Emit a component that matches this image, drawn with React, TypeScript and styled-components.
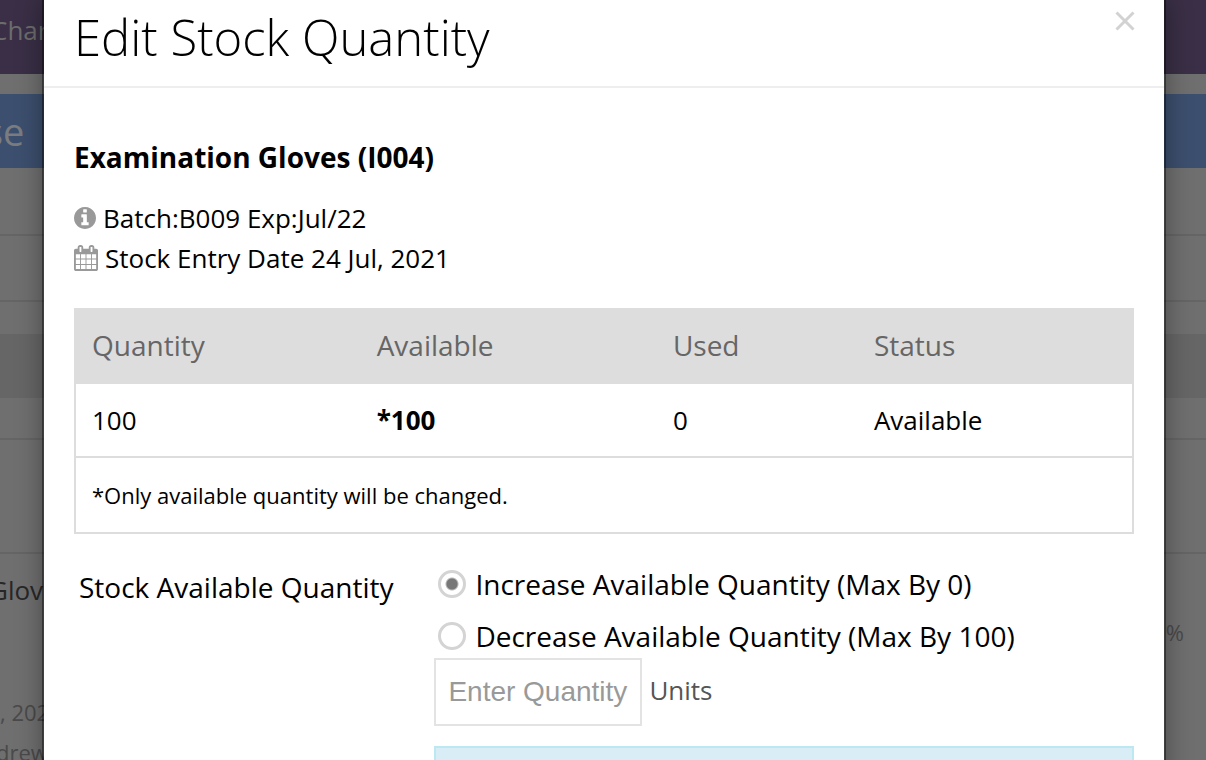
import React, { useState } from "react";
import styled, { createGlobalStyle } from "styled-components";

const GlobalStyle = createGlobalStyle`
  * { box-sizing: border-box; }
  body {
    margin: 0;
    background: #6f6f6f;
    color: #000;
    font-family: "Open Sans", "Noto Sans", sans-serif;
    font-size: 26px;
    line-height: 40px;
  }
`;

const Screen = styled.div`
  position: relative;
  height: 100vh;
  overflow: hidden;
`;

const Page = styled.div`
  background: #6f6f6f;
  height: 100%;
  overflow: hidden;
`;

const TopBar = styled.div`
  height: 74px;
  padding-top: 10px;
  margin-bottom: 20px;
  background: #3a2f46;
  color: #6c6c6c;
`;

const Heading = styled.div`
  height: 74px;
  background: #3c4f6e;
  color: #7a7c80;
  font-size: 38px;
  line-height: 74px;
`;

const Cut = styled.span<{ $by: number }>`
  display: block;
  margin-left: -${(p) => p.$by}px;
  white-space: nowrap;
`;

const Line = styled.div<{ $height: number }>`
  height: ${(p) => p.$height}px;
  border-bottom: 2px solid #656565;
`;

const Band = styled.div`
  height: 64px;
  margin-top: 32px;
  background: #666;
`;

const ItemRow = styled.div`
  display: flex;
  justify-content: space-between;
  height: 138px;
  padding: 16px 22px 0 0;
  color: #272727;
`;

const Percent = styled.span`
  padding-top: 42px;
  color: #4a4a4a;
  font-size: 22px;
`;

const Meta = styled.div`
  color: #4a4a4a;
  font-size: 22px;
`;

const Overlay = styled.div`
  position: absolute;
  inset: 0;
  padding: 0 40px 0 42px;
`;

const Dialog = styled.section`
  min-height: 100%;
  background: #fff;
  background-clip: padding-box;
  border: solid rgba(0, 0, 0, 0.42);
  border-width: 0 2px;
  box-shadow: 0 0 24px rgba(0, 0, 0, 0.35);
`;

const DialogHeader = styled.header`
  display: flex;
  justify-content: space-between;
  align-items: flex-start;
  height: 88px;
  padding: 4px 28px 0 30px;
  border-bottom: 2px solid #eee;
`;

const Title = styled.h1`
  margin: 0;
  font-size: 49px;
  font-weight: 300;
  line-height: 66px;
`;

const CloseButton = styled.button`
  display: flex;
  margin: 6px 0 0;
  padding: 0;
  border: 0;
  background: none;
  color: #d2d2d2;
`;

const DialogBody = styled.div`
  padding: 50px 30px 0;
`;

const ItemName = styled.h2`
  margin: 0 0 22px;
  font-size: 28px;
  font-weight: 700;
  line-height: 38px;
`;

const Detail = styled.div`
  display: flex;
  align-items: center;
  gap: 7px;
  height: 40px;

  svg { color: #999; }
`;

const StockTable = styled.table`
  width: 100%;
  margin: 30px 0 26px;
  border-collapse: collapse;
  border: 2px solid #ddd;
  table-layout: fixed;

  th {
    height: 74px;
    padding: 0 16px 2px;
    background: #ddd;
    color: #666;
    font-size: 28px;
    font-weight: 400;
    text-align: left;
  }
  td {
    height: 74px;
    padding: 0 16px 1px;
    border-top: 2px solid #ddd;
  }
`;

const Note = styled.td`
  && { height: 76px; }
  font-size: 22px;
`;

const Form = styled.form`
  display: grid;
  grid-template-columns: 34% 66%;
  font-size: 28px;
`;

const FieldLabel = styled.span`
  padding: 7px 0 0 5px;
`;

const Choice = styled.label`
  display: flex;
  align-items: center;
  gap: 9px;
  height: 52px;
  padding-left: 4px;
  line-height: 40px;
  white-space: nowrap;
`;

const Radio = styled.input`
  appearance: none;
  flex: none;
  width: 28px;
  height: 28px;
  margin: 0;
  border: 3px solid #d4d4d4;
  border-radius: 50%;
  background: #fff;

  &:checked {
    background: radial-gradient(circle, #777 5px, #fff 7px);
  }
`;

const Choices = styled.div`
  margin: -2px 0 -4px;
`;

const Amount = styled.div`
  display: flex;
  align-items: center;
  gap: 7px;
  margin-bottom: 20px;
`;

const AmountInput = styled.input`
  width: 208px;
  height: 68px;
  padding: 0 12px;
  border: 2px solid #e3e3e3;
  background: #fff;
  color: #555;
  font-family: "Liberation Sans", Arial, sans-serif;
  font-size: 28px;

  &::placeholder { color: #999; opacity: 1; }
`;

const Units = styled.label`
  padding-bottom: 4px;
  color: #555;
  font-size: 26px;
`;

const Notice = styled.div`
  height: 80px;
  border: 2px solid #bce8f1;
  background: #d9edf7;
`;

const InfoIcon = () => (
  <svg width="22" height="22" viewBox="128 128 1536 1536" fill="currentColor" aria-hidden="true">
    <path d="M1152 1376v-160q0-14-9-23t-23-9h-96v-512q0-14-9-23t-23-9h-320q-14 0-23 9t-9 23v160q0 14 9 23t23 9h96v320h-96q-14 0-23 9t-9 23v160q0 14 9 23t23 9h448q14 0 23-9t9-23zm-128-896v-160q0-14-9-23t-23-9h-192q-14 0-23 9t-9 23v160q0 14 9 23t23 9h192q14 0 23-9t9-23zm640 416q0 209-103 385.5t-279.5 279.5-385.5 103-385.5-103-279.5-279.5-103-385.5 103-385.5 279.5-279.5 385.5-103 385.5 103 279.5 279.5 103 385.5z" />
  </svg>
);

const CalendarIcon = () => (
  <svg width="24" height="26" viewBox="0 0 1664 1792" fill="currentColor" aria-hidden="true">
    <path d="M128 1664h288v-288h-288v288zm352 0h320v-288h-320v288zm-352-352h288v-320h-288v320zm352 0h320v-320h-320v320zm-352-384h288v-288h-288v288zm736 736h320v-288h-320v288zm-384-736h320v-288h-320v288zm768 736h288v-288h-288v288zm-384-352h320v-320h-320v320zm-352-864v-288q0-13-9.5-22.5t-22.5-9.5h-64q-13 0-22.5 9.5t-9.5 22.5v288q0 13 9.5 22.5t22.5 9.5h64q13 0 22.5-9.5t9.5-22.5zm736 864h288v-320h-288v320zm-384-384h320v-288h-320v288zm384 0h288v-288h-288v288zm32-480v-288q0-13-9.5-22.5t-22.5-9.5h-64q-13 0-22.5 9.5t-9.5 22.5v288q0 13 9.5 22.5t22.5 9.5h64q13 0 22.5-9.5t9.5-22.5zm384-64v1280q0 52-38 90t-90 38h-1408q-52 0-90-38t-38-90v-1280q0-52 38-90t90-38h128v-96q0-66 47-113t113-47h64q66 0 113 47t47 113v96h384v-96q0-66 47-113t113-47h64q66 0 113 47t47 113v96h128q52 0 90 38t38 90z" />
  </svg>
);

const CloseIcon = () => (
  <svg width="22" height="22" viewBox="0 0 22 22" fill="none" stroke="currentColor" strokeWidth="3" aria-hidden="true">
    <path d="M2.5 2.5l17 17M19.5 2.5l-17 17" />
  </svg>
);

export default function App() {
  const [mode, setMode] = useState("increase");
  const [amount, setAmount] = useState("");

  return (
    <>
      <GlobalStyle />
      <Screen>
        <Page>
          <TopBar><Cut $by={9}>Char</Cut></TopBar>
          <Heading><Cut $by={15}>se</Cut></Heading>
          <Line $height={68} />
          <Line $height={66} />
          <Band />
          <Line $height={42} />
          <Line $height={114} />
          <ItemRow>
            <Cut $by={11}>Glov</Cut>
            <Percent>%</Percent>
          </ItemRow>
          <Meta>
            <Cut $by={0}>, 202</Cut>
            <Cut $by={4}>drew</Cut>
          </Meta>
        </Page>
        <Overlay>
          <Dialog role="dialog" aria-modal="true" aria-labelledby="dialog-title">
            <DialogHeader>
              <Title id="dialog-title">Edit Stock Quantity</Title>
              <CloseButton type="button" aria-label="Close"><CloseIcon /></CloseButton>
            </DialogHeader>
            <DialogBody>
              <ItemName>Examination Gloves (I004)</ItemName>
              <Detail><InfoIcon />Batch:B009 Exp:Jul/22</Detail>
              <Detail><CalendarIcon />Stock Entry Date 24 Jul, 2021</Detail>
              <StockTable>
                <colgroup>
                  <col width="27%" />
                  <col width="28%" />
                  <col width="19%" />
                  <col />
                </colgroup>
                <thead>
                  <tr><th>Quantity</th><th>Available</th><th>Used</th><th>Status</th></tr>
                </thead>
                <tbody>
                  <tr><td>100</td><td><b>*100</b></td><td>0</td><td>Available</td></tr>
                  <tr><Note colSpan={4}>*Only available quantity will be changed.</Note></tr>
                </tbody>
              </StockTable>
              <Form onSubmit={(e) => e.preventDefault()}>
                <FieldLabel id="quantity-label">Stock Available Quantity</FieldLabel>
                <div>
                  <Choices role="radiogroup" aria-labelledby="quantity-label">
                    <Choice>
                      <Radio type="radio" name="mode" checked={mode === "increase"} onChange={() => setMode("increase")} />
                      Increase Available Quantity (Max By 0)
                    </Choice>
                    <Choice>
                      <Radio type="radio" name="mode" checked={mode === "decrease"} onChange={() => setMode("decrease")} />
                      Decrease Available Quantity (Max By 100)
                    </Choice>
                  </Choices>
                  <Amount>
                    <AmountInput id="amount" placeholder="Enter Quantity" value={amount} onChange={(e) => setAmount(e.target.value)} />
                    <Units htmlFor="amount">Units</Units>
                  </Amount>
                  <Notice />
                </div>
              </Form>
            </DialogBody>
          </Dialog>
        </Overlay>
      </Screen>
    </>
  );
}
